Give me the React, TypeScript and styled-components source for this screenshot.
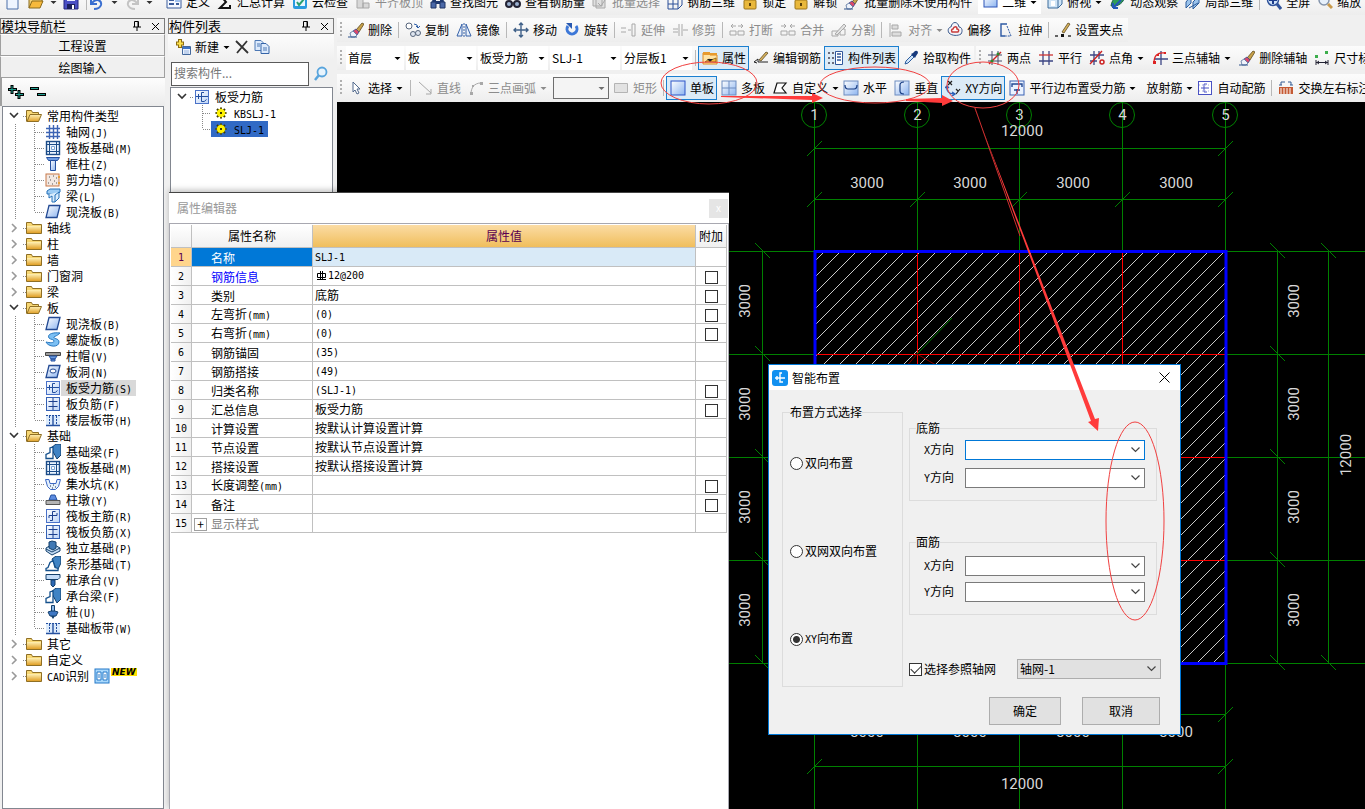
import React from "react";
import styled, { createGlobalStyle, css } from "styled-components";

const GlobalStyle = createGlobalStyle`
  * { box-sizing: border-box; }
  body {
    margin: 0;
    overflow: hidden;
    background: #f0f0f0;
    color: #000;
    font: 12px/16px "Noto Sans CJK SC", "Noto Sans", sans-serif;
  }
  button, select, input { font: inherit; color: inherit; margin: 0; }
`;

/* ---------- shared text ---------- */

const Latin = styled.span`
  font-family: "DejaVu Sans Mono", "Liberation Mono", monospace;
  font-size: 10px;
`;

function Mixed({ children }: { children: string }) {
  return (
    <>
      {children.split(/([\x20-\x7e]+)/).map((part, i) =>
        i % 2 ? <Latin key={i}>{part}</Latin> : part
      )}
    </>
  );
}

/* ---------- icons ---------- */

const B = "#2b5fb8";
const G = "#a8a8a8";

const icons: Record<string, React.ReactNode> = {
  doc: <path d="M3 0h8l3 3v12H3z" fill="#eef5ff" stroke="#4a6ea8" />,
  openDoc: (
    <>
      <path d="M1 14V3h5l1 2h7v3" fill="#f3d27a" stroke="#8a6a1c" />
      <path d="M1 14 4 7h11l-3 7z" fill="#f7b93c" stroke="#8a6a1c" />
    </>
  ),
  save: (
    <>
      <path d="M1 1h14v14H1z" fill="#4a4fc4" stroke="#22267c" />
      <path d="M4 1h8v6H4z" fill="#e8ecff" />
      <path d="M4 10h8v5H4z" fill="#1c205c" />
      <path d="M9 11h2v4H9z" fill="#fff" />
    </>
  ),
  undo: <path d="M3 9c4-5 10-3 9 2-1 3-4 4-7 4M2 4v6h6" fill="none" stroke="#3a6fd0" strokeWidth="2" />,
  redo: <path d="M13 9C9 4 3 6 4 11c1 3 4 4 7 4M14 4v6H8" fill="none" stroke="#c4c4c4" strokeWidth="2" />,
  define: (
    <>
      <path d="M1 1h14v13H1z" fill="#f4f8ff" stroke="#3a5c9c" />
      <path d="M3 6h5M3 10h5M10 10h3" stroke="#3a5c9c" strokeWidth="2" />
      <path d="M9 4h5v4H9z" fill="#9fc0ee" />
    </>
  ),
  sigma: <path d="M13 4V1H3l6 7-6 6h10v-3" fill="none" stroke="#111" strokeWidth="2" />,
  cloud: (
    <>
      <rect x="1" y="0" width="14" height="15" rx="2" fill="#2a9be0" />
      <path d="M3 4h10v8H3z" fill="#e8f6ff" />
      <path d="m5 8 2 3 5-6" fill="none" stroke="#2aa070" strokeWidth="2" />
    </>
  ),
  flush: (
    <>
      <path d="M2 5h6v9H2zM8 9h6v5H8z" fill="#d8d8d8" stroke={G} />
      <path d="M3 2h9" stroke={G} />
    </>
  ),
  find: (
    <>
      <path d="M1 8h5v6H1zM10 8h5v6h-5z" fill="#4a68a8" stroke="#1e3464" />
      <path d="M3 2h3v6H2zM10 2h3l1 6h-4zM6 7h4v3H6z" fill="#203a70" />
    </>
  ),
  viewRebar: (
    <>
      <circle cx="4" cy="10" r="3" fill="#9ab0d0" stroke="#223" strokeWidth="2" />
      <circle cx="12" cy="10" r="3" fill="#9ab0d0" stroke="#223" strokeWidth="2" />
      <path d="M6 9h4M3 6l3-3M12 6l-2-3" stroke="#223" />
    </>
  ),
  batch: (
    <>
      <path d="M1 2h9v10H1zM4 5h9v9H4z" fill="#e0e0e0" stroke={G} />
      <path d="m6 9 3 3 4-6" fill="none" stroke={G} />
    </>
  ),
  cube3d: (
    <path d="M1 5h10v10H1zM5 1h10v10M1 5l4-4M11 5l4-4M11 15l4-4M6 5v10M1 10h10M10 1 6 5" fill="none" stroke="#2b4f98" />
  ),
  lock: (
    <>
      <path d="M5 7V4q3-4 6 0v3" fill="none" stroke="#8a8a8a" strokeWidth="2" />
      <rect x="2" y="6" width="12" height="9" rx="1" fill="#e9b83c" stroke="#9c7418" />
      <path d="M7 9h2v3H7z" fill="#5c420a" />
    </>
  ),
  brush: (
    <>
      <path d="M8 8 14 1l2 1-5 8z" fill="#c8a24a" stroke="#5e4a1c" strokeWidth=".8" />
      <path d="M5 9 8 7l3 3-2 3z" fill="#d8486c" stroke="#3a4a8c" strokeWidth=".8" />
      <path d="M2 11l3-2 4 4-2 2H3z" fill="#eef2fa" stroke="#54719c" strokeWidth=".8" />
      <path d="M0 15h9" stroke="#30548c" />
    </>
  ),
  sq2d: <rect x="2" y="1" width="13" height="12" fill="url(#blueFade)" stroke="#2c55b8" />,
  topView: (
    <>
      <path d="M1 5 5 1h10v9l-4 4H1z" fill="#cfe4f6" stroke="#3c6c9c" />
      <path d="M1 5h10v9M11 5l4-4" fill="none" stroke="#3c6c9c" />
      <path d="M4 7h4v5H4z" fill="#fff" />
    </>
  ),
  orbit: (
    <>
      <path d="M1 12C2 4 8 0 15 2c-1 6-6 11-14 10z" fill="#2f9e58" stroke="#1a5c4c" />
      <path d="m3 14 8-8M3 14h5M3 14V9" stroke="#2458b8" strokeWidth="2" fill="none" />
    </>
  ),
  local3d: (
    <>
      <path d="m1 8 5-6v7l-5 5zM8 8l6-6v7l-6 6z" fill="#9cc4ec" stroke="#2c5c9c" />
      <path d="m4 14 9-5" stroke="#2c5c9c" />
    </>
  ),
  zoomAll: (
    <>
      <circle cx="7" cy="6" r="5.5" fill="#cfe2f8" stroke="#31549c" strokeWidth="1.5" />
      <path d="M7 2v8M3 6h8" stroke="#1c3c8c" strokeWidth="2" />
      <path d="m11 10 4 5" stroke="#31549c" strokeWidth="3" />
    </>
  ),
  zoom: (
    <>
      <circle cx="7" cy="6" r="5" fill="#e6f0fb" stroke="#8494ac" strokeWidth="1.5" />
      <path d="m11 10 4 4" stroke="#c89a4c" strokeWidth="3" />
    </>
  ),
  copy: (
    <>
      <circle cx="4" cy="4" r="3" fill="#fff" stroke="#56657c" />
      <circle cx="8" cy="12" r="2.5" fill="#dfe6f0" stroke="#56657c" />
      <circle cx="13" cy="11" r="2.5" fill="#dfe6f0" stroke="#56657c" />
      <path d="M9 2q4 0 4 4M11 4l2 2 2-2" fill="none" stroke="#2f5fa8" />
    </>
  ),
  mirror: (
    <>
      <path d="M6 2v12H1zM10 2v12h5z" fill="#e8f0fb" stroke="#3561a8" />
      <path d="M8 1v14" stroke="#3561a8" strokeDasharray="2 1" />
    </>
  ),
  move: <path d="M8 1v14M1 8h14M6 3l2-2 2 2M6 13l2 2 2-2M3 6 1 8l2 2M13 6l2 2-2 2" fill="none" stroke="#3f6088" strokeWidth="1.4" />,
  rotate: (
    <>
      <path d="M4 4a5 5 0 1 0 8 0" fill="none" stroke="#3d78d8" strokeWidth="3" />
      <path d="M2 1h6v6z" fill="#2858b0" />
    </>
  ),
  extend: <path d="M0 6h5M0 10h5M7 8h3M11 2h3v12h-3z" fill="none" stroke={G} />,
  trim: <path d="M1 7h5M1 10h5M7 2v12M10 2v12M11 8h5" fill="none" stroke={G} />,
  breakUp: <path d="M1 9h6v4H1zM9 9h6v4H9zM2 4h5M4 2 2 4l2 2M9 4h5M12 2l2 2-2 2" fill="none" stroke={G} />,
  merge: <path d="M1 9h6v4H1zM9 9h6v4H9zM1 4h5M4 2l2 2-2 2M10 4h5M12 2l-2 2 2 2" fill="none" stroke={G} />,
  split: (
    <>
      <path d="M1 9h6v5H1zM9 7h5v6H9z" fill="none" stroke={G} />
      <path d="m4 12 9-10 2 2-9 9z" fill="#e4e4e4" stroke={G} />
    </>
  ),
  align: <path d="M2 1v14M4 3h6v4H4zM4 10h9v4H4z" fill="#ddd" stroke={G} />,
  offset: (
    <>
      <path d="M2 11c-2-3 0-6 2-6 1-6 7-6 8 0 3 0 4 4 2 7-3 2-9 2-12-1z" fill="#f4f4fa" stroke="#39598c" />
      <path d="M5 10c-1-2 0-3 1-3 1-3 4-3 4 0 2 0 2 2 1 3z" fill="#fff" stroke="#c83c3c" strokeWidth="1.5" />
    </>
  ),
  stretch: (
    <>
      <path d="M9 2H3v12h4" fill="none" stroke="#2d59a4" strokeWidth="1.4" />
      <path d="m9 4 4 10H7" fill="none" stroke="#2d59a4" strokeDasharray="2 1" />
    </>
  ),
  grip: (
    <>
      <path d="M0 14h3M13 14h3" stroke="#333" strokeWidth="1.4" />
      <path d="M6 12h3v3H6z" fill="#111" />
      <path d="m7 10 6-9 2 1-6 9z" fill="#d8b25c" stroke="#5c4a22" strokeWidth=".8" />
    </>
  ),
  property: (
    <>
      <path d="M1 3h6l1 2h7v9H1z" fill="#ffe3a4" stroke="#e08a1c" />
      <path d="M1 2h7v1h7v2H1z" fill="#e89a2c" />
      <path d="m3 12 4-3 2 1 5-2v4z" fill="#f2b83c" stroke="#7c5410" strokeWidth=".7" />
      <path d="M5 9h6l-3 3z" fill="#222" />
    </>
  ),
  editRebar: (
    <>
      <path d="m1 12 4-3v3h10M1 12l3 1" fill="none" stroke="#222" />
      <path d="m6 10 7-8 2 1-7 8z" fill="#d8b25c" stroke="#5c4a22" strokeWidth=".8" />
    </>
  ),
  list: (
    <>
      <path d="M0 3h2M0 8h2M0 13h2M4 3h2M4 8h2M4 13h2" stroke="#445" strokeWidth="1.5" />
      <path d="M7.5 1.5h7v13h-7z" fill="#fff" stroke="#31589c" />
      <path d="M9 4h4M9 7h4M9 10h4" stroke="#31589c" strokeWidth="1.4" />
    </>
  ),
  picker: (
    <>
      <path d="m2 14 1-3 6-6 2 2-6 6z" fill="#cfe4fa" stroke="#2c5c9c" />
      <path d="m8 4 2-1 2-2q3-1 3 2l-2 3-1 2z" fill="#173a7c" />
    </>
  ),
  twoPoint: (
    <>
      <path d="M1 5h14M1 11h14M5 1v14M11 1v14" stroke="#444c6c" />
      <path d="M2 14 14 2" stroke="#c22" strokeWidth="1.4" />
      <circle cx="11" cy="4" r="1.5" fill="#2a8c2a" />
      <circle cx="5" cy="11" r="1.5" fill="#2a8c2a" />
    </>
  ),
  parallel: (
    <>
      <path d="M5 1v14M11 1v14M1 11h14" stroke="#3c4684" strokeWidth="1.3" />
      <path d="M1 5h14" stroke="#c33" strokeWidth="1.3" />
    </>
  ),
  pointAngle: (
    <>
      <path d="M1 5h14M5 1v14M10 1v8M1 11h7" stroke="#3c4684" strokeWidth="1.3" />
      <path d="M1 14 13 1" stroke="#c22" strokeWidth="1.4" />
      <circle cx="13" cy="12" r="2" fill="none" stroke="#c22" strokeWidth="1.5" />
    </>
  ),
  threePoint: (
    <>
      <path d="M9 1v14M3 9h13" stroke="#3c4684" strokeWidth="1.3" />
      <path d="M2 13C2 6 5 2 13 3" fill="none" stroke="#d22" strokeWidth="1.3" />
      <path d="M1 11h3v3H1zM5 4h2v2H5zM12 2h2v2h-2z" fill="#d22" />
    </>
  ),
  dimension: (
    <>
      <path d="M2 10v5M14 10v5M2 12.5h12M5 11l-2 1.5L5 14M11 11l2 1.5-2 1.5" fill="none" stroke="#223" />
      <path d="M1 5h3v3H1zM11 1h3v3h-3z" fill="#3cae4c" />
    </>
  ),
  cursor: <path d="M5 2v10l2-2 2 4 2-1-2-4h3z" fill="#fff" stroke="#51698c" />,
  line: <path d="M2 2 14 13M14 9v5H9" fill="none" stroke={G} />,
  arc: (
    <>
      <path d="M3 14C3 8 6 3 13 3" fill="none" stroke={G} />
      <path d="M2 12h3v3H2zM4 5h2v2H4zM12 2h3v3h-3z" fill={G} />
    </>
  ),
  rect: <path d="M1.5 3.5h13v9h-13z" fill="#e2e2e2" stroke="#b4b4b4" />,
  single: <rect x="1" y="1" width="14" height="14" fill="url(#blueFade)" stroke="#2c55c8" />,
  multi: (
    <>
      <rect x="1" y="1" width="14" height="14" fill="url(#blueFade)" stroke="#6c8cc0" />
      <path d="M8 1v14M1 8h14" stroke="#6c8cc0" />
    </>
  ),
  custom: <path d="M2 13 5 3h9l-4 5 4 5z" fill="#fff" stroke="#111" strokeWidth="1.2" />,
  horiz: (
    <>
      <rect x="1" y="1" width="14" height="14" fill="url(#blueFade)" stroke="#6c8cc0" />
      <path d="M2 5q0 4 3 4h6q3 0 3-4" fill="none" stroke="#173c84" strokeWidth="1.2" />
    </>
  ),
  vert: (
    <>
      <rect x="1" y="1" width="14" height="14" fill="url(#blueFade)" stroke="#6c8cc0" />
      <path d="M10 2Q6 2 6 5v6q0 3 4 3" fill="none" stroke="#173c84" strokeWidth="1.2" />
    </>
  ),
  xy: (
    <>
      <path d="m3 1 4 4M7 1 3 5M11 9l2 2M15 9l-4 5" stroke="#222" strokeWidth="1.2" />
      <path d="M2 6c-1 5 2 8 7 8M0 8l2-2 2 2M7 12l3 2-3 2" fill="none" stroke={B} strokeWidth="1.4" />
    </>
  ),
  edgeLayout: (
    <>
      <rect x="1" y="1" width="14" height="14" fill="#eaf2ff" stroke="#3a62b4" />
      <path d="M3 7V4h10v3M8 9v5M5 10h6" fill="none" stroke="#234a94" strokeWidth="1.4" />
    </>
  ),
  autoRebar: (
    <>
      <rect x="1.5" y="1.5" width="13" height="13" fill="#fff" stroke="#4a52c4" />
      <path d="M10 4H7v8h3M4 8h8" fill="none" stroke="#4a52c4" />
      <path d="M2 5h12M2 11h12" stroke="#a8ace0" strokeDasharray="1 2" />
    </>
  ),
  swap: (
    <>
      <path d="M1 7h14v7H1z" fill="#c45a34" />
      <path d="M3 8v6M6 8v6M9 8v6M12 8v6" stroke="#fff" />
      <path d="M3 5V2h4M13 5V2h-3M1 5h3M12 5h3" fill="none" stroke="#345c94" />
    </>
  ),
  newItem: (
    <>
      <path d="M5 0v9M1 4.5h8" stroke="#8c6c10" strokeWidth="4" />
      <path d="M5 1v7M2 4.5h6" stroke="#fbe04c" strokeWidth="2" />
      <path d="M7.5 7.5h8v8h-8z" fill="#eaf2ff" stroke="#44689c" />
      <path d="M8 9h7" stroke="#3c74c8" strokeWidth="2" />
      <path d="M9 12h5M9 14h5" stroke="#9ab4dc" />
    </>
  ),
  del: <path d="M2 2 14 14M13 2 3 14" stroke="#333" strokeWidth="1.8" />,
  duplicate: (
    <>
      <path d="M1 1.5h6l3 3v7H1z" fill="#dceafc" stroke="#4c78b4" />
      <path d="M7 4.5h5l3 3v7H7z" fill="#dceafc" stroke="#3564a8" />
      <path d="M3 5h3M3 7h3M9 9h4M9 11h4" stroke="#4c78b4" />
    </>
  ),
  search: (
    <>
      <circle cx="9" cy="6" r="4.5" fill="#e8f4fd" stroke="#58a4dc" strokeWidth="1.8" />
      <path d="m6 9-4 5" stroke="#58a4dc" strokeWidth="2.5" />
    </>
  ),
  folder: (
    <>
      <path d="M.5 13.5v-11h5l1 2h9v9z" fill="#f7d774" stroke="#8f6f24" />
      <path d="M1 6h14v7H1z" fill="url(#gold)" />
    </>
  ),
  folderOpen: (
    <>
      <path d="M.5 13.5v-11h5l1 2h6v3" fill="#f7d774" stroke="#8f6f24" />
      <path d="m1 13.5 3-7h11.5l-3 7z" fill="url(#gold)" stroke="#8f6f24" />
    </>
  ),
  axis: <path d="M1 4.5h14M1 8.5h14M1 12.5h14M4.5 1v14M8.5 1v14M12.5 1v14" stroke="#3c64b4" strokeWidth="1.4" />,
  raft: (
    <>
      <rect x="1.5" y="1.5" width="13" height="13" fill="#eaf4ff" stroke="#1c4c88" strokeWidth="1.4" />
      <path d="M4.5 1v14M11.5 1v14M1 4.5h14M1 11.5h14" stroke="#1c4c88" />
      <path d="M6.500 6.500h3v3h-3z" fill="#fff" stroke="#7ca4d4" />
    </>
  ),
  column: (
    <>
      <path d="M1.500 1.500h13l-2 3h-9z" fill="#6c9ce4" stroke="#2450a0" />
      <path d="M5.500 4.500h5v10h-5z" fill="url(#blueFade)" stroke="#2450a0" />
    </>
  ),
  wall: (
    <>
      <rect x="1" y="2" width="13" height="12" fill="#f2e8e2" stroke="#c87848" />
      <path d="M4 5h1M8 4h1M11 6h1M5 8h1M9 9h1M3 11h1M7 12h1M11 11h1" stroke="#555" />
      <path d="M14 4v2M14 10v2" stroke="#e8a03c" strokeWidth="2" />
    </>
  ),
  beam: (
    <>
      <path d="M2 3 5 1h10v3l-3 2H2z" fill="#9cccf4" stroke="#2470b8" />
      <path d="M4 6v4l3-2v6h3l4-4V4" fill="#d8ecfc" stroke="#2470b8" />
      <path d="M10 14V7l4-3" fill="none" stroke="#2470b8" />
    </>
  ),
  slab: <path d="M4 1.500h11l-3 12H1z" fill="url(#blueFade)" stroke="#234a94" strokeWidth="1.3" />,
  spiral: <path d="M15 1C6 0 2 3 4 6c2 2 5 1 5 3s-4 2-8 1c2 5 13 6 13 0 0-4-6-3-5-5 1-1 3-1 6-4z" fill="#7cc0f4" stroke="#2878c0" />,
  cap: (
    <>
      <path d="M.5 4.500h15v3H.5z" fill="#9c9c9c" stroke="#444" />
      <path d="M4 8h8l-2 3H6zM6 11h4v2H6z" fill="#6c9ce0" stroke="#2450a0" />
    </>
  ),
  hole: (
    <>
      <path d="M4 1.500h11l-3 12H1z" fill="url(#blueFade)" stroke="#234a94" strokeWidth="1.3" />
      <ellipse cx="8" cy="7" rx="3" ry="2" fill="#fff" stroke="#234a94" />
    </>
  ),
  force: (
    <>
      <rect x="1.500" y="1.500" width="13" height="13" fill="url(#paleFade)" stroke="#4a72c8" />
      <path d="M2 7.500h12M10 3.500H7.500v9q3 1 5-2M4.500 5v5" fill="none" stroke="#2450a0" />
    </>
  ),
  negative: (
    <>
      <rect x="1.500" y="1.500" width="13" height="13" fill="url(#paleFade)" stroke="#3460b4" />
      <path d="M3.500 5.500h9M3.500 10.500h9M8 2v12" fill="none" stroke="#1c4090" />
    </>
  ),
  strip: (
    <>
      <path d="M1 3h14v10H1z" fill="#dcebfc" />
      <path d="M1 13.5h14M8 4v9" stroke="#2450a0" strokeWidth="1.4" />
      <path d="M1 3.500h14M4.500 4v9M11.500 4v9" stroke="#2450a0" strokeDasharray="2 1" />
    </>
  ),
  footBeam: (
    <>
      <path d="m6 4 5-4h5v11l-4 4z" fill="#3f83c4" stroke="#14406c" />
      <path d="M1 14.500v-4l4-2V4l3-1v11.500z" fill="#fff" stroke="#14508c" strokeWidth="1.3" />
    </>
  ),
  pit: (
    <>
      <path d="M.5 3.500H4l1 4h6l1-4h3.500l-2 7-3 3h-5l-3-3z" fill="#e4f0fc" stroke="#3c68c4" />
      <path d="M5 10h1M8 9h1M10 11h1M7 12h1" stroke="#234" />
    </>
  ),
  pier: (
    <>
      <path d="M6 3h4l2 5H4z" fill="#5c8ce0" stroke="#2450a0" />
      <path d="M1 8.5h14v4H1z" fill="#b4b4b4" stroke="#555" />
    </>
  ),
  mainBar: (
    <>
      <rect x="1.500" y="1.500" width="13" height="13" fill="url(#paleFade)" stroke="#4a72c8" />
      <path d="M4 10V7.500h8V5M10.500 3.500h-3v9H5" fill="none" stroke="#1c4090" />
    </>
  ),
  isolated: (
    <>
      <path d="m1 8 7-4 7 4v3l-8 4-6-4z" fill="#c4dcf4" stroke="#14406c" />
      <path d="M4 2l3-1 4 1v6l-3 2-4-2z" fill="#3f78b4" stroke="#14406c" />
      <path d="m1 9 6 3 8-4" fill="none" stroke="#14406c" />
    </>
  ),
  stripFoot: (
    <>
      <path d="m7 3 4-3h5v7l-4 8z" fill="#3f83c4" stroke="#14406c" />
      <path d="M1 14.500v-2l2-1 2-5 3-2 2 7 3 1v2z" fill="#fff" stroke="#14508c" strokeWidth="1.3" />
    </>
  ),
  pileCap: (
    <>
      <path d="M1 2.500h14v3l-2 2H1z" fill="#c4dcf8" stroke="#14406c" />
      <path d="M6 8h4v5l-2 2-2-2z" fill="#2c68b4" stroke="#14406c" />
    </>
  ),
  pile: (
    <>
      <path d="M6.500 1.500h3v6h-3z" fill="#8cb8e8" stroke="#14406c" />
      <path d="m3 8 3-1h4l3 1-2 4H5z" fill="#3f78c4" stroke="#14406c" />
      <path d="m6 12 2 3 2-3z" fill="#14406c" />
    </>
  ),
  cad: (
    <>
      <rect x="1" y="1" width="14" height="14" fill="#a8d8fc" stroke="#2478c8" />
      <path d="M3 4h4v8H3zM9 4h4v8H9z" fill="#fff" stroke="#2478c8" />
      <path d="M4 7h2M4 9h2M10 7h2M10 9h2" stroke="#2478c8" />
    </>
  ),
  gear: (
    <>
      <path d="M8 2.500v11M2.500 8h11M4 4l8 8M12 4l-8 8" stroke="#3c3800" strokeWidth="2" />
      <circle cx="8" cy="8" r="4" fill="#fff200" />
      <path d="M8 3.500v9M3.500 8h9" stroke="#fff200" />
      <path d="M7 7h2v2H7z" fill="#3c3800" />
    </>
  ),
  app: (
    <>
      <rect x="0" y="0" width="16" height="16" rx="3" fill="#1190f0" />
      <path d="M3 8h10M10 3H8v9h3M5 6v4" fill="none" stroke="#fff" strokeWidth="1.4" />
    </>
  ),
};

const IconSvg = styled.svg`
  flex: none;
  display: block;
`;

function Icon({ name }: { name: string }) {
  return (
    <IconSvg width="16" height="16" viewBox="0 0 16 16" aria-hidden="true">
      {icons[name]}
    </IconSvg>
  );
}

const Defs = () => (
  <svg width="0" height="0" display="block" aria-hidden="true">
    <defs>
      <linearGradient id="blueFade" x1="0" y1="0" x2="1" y2="1">
        <stop offset="0" stopColor="#ffffff" />
        <stop offset="1" stopColor="#8cb4f0" />
      </linearGradient>
      <linearGradient id="paleFade" x1="0" y1="0" x2="1" y2="1">
        <stop offset="0" stopColor="#ffffff" />
        <stop offset="1" stopColor="#bcd4f8" />
      </linearGradient>
      <linearGradient id="gold" x1="0" y1="0" x2="0" y2="1">
        <stop offset="0" stopColor="#fff0b4" />
        <stop offset="1" stopColor="#e0a028" />
      </linearGradient>
    </defs>
  </svg>
);

const Caret = () => (
  <IconSvg width="7" height="3" viewBox="0 0 7 3" aria-hidden="true">
    <path d="M.5 0h6l-3 3z" fill="currentColor" />
  </IconSvg>
);

/* ---------- toolbars ---------- */

const Shell = styled.div`
  position: relative;
  display: flex;
  flex-direction: column;
  min-height: 100vh;
  overflow: hidden;
`;

const TopStrip = styled.header`
  height: 18px;
  overflow: hidden;
  display: flex;
  flex-direction: column;
  justify-content: flex-end;
  padding-bottom: 3px;
`;

const Bar = styled.div<{ $h: number; $fit?: boolean }>`
  display: flex;
  align-items: center;
  flex: none;
  height: ${(p) => p.$h}px;
  align-self: ${(p) => (p.$fit ? "flex-start" : "stretch")};
  padding-right: ${(p) => (p.$fit ? 2 : 0)}px;
  background: linear-gradient(#fcfcfc, #f4f4f4 60%, #ededed);
  white-space: nowrap;
`;

const Tool = styled.button<{ $on?: boolean; $off?: boolean; $tail: number; $bare?: boolean }>`
  display: flex;
  align-items: center;
  gap: 4px;
  flex: none;
  height: 24px;
  padding: 0 ${(p) => p.$tail}px 0 ${(p) => (p.$bare ? 6 : 4)}px;
  border: 0;
  background: none;
  color: ${(p) => (p.$off ? "#8c8c8c" : "#000")};
  white-space: nowrap;
  ${(p) =>
    p.$on &&
    css`
      background: #dcebf7;
      box-shadow: inset 0 0 0 1px #1a7fd0;
    `}
`;

const Sep = styled.span`
  flex: none;
  width: 1px;
  height: 16px;
  margin: 0 2px 0 3px;
  background: #b8b8b8;
`;

const Grip = styled.span`
  flex: none;
  width: 2px;
  height: 16px;
  margin: 0 2px 0 3px;
  background: repeating-linear-gradient(#b0b0b0 0 2px, transparent 2px 4px);
`;

type Drop = "menu" | "split";
interface ToolProps {
  icon?: string;
  label: string;
  on?: boolean;
  off?: boolean;
  drop?: Drop;
}

function T({ icon, label, on, off, drop }: ToolProps) {
  const tail = drop === "menu" ? 0 : drop === "split" ? 4 : 3;
  return (
    <Tool type="button" disabled={off} $on={on} $off={off} $tail={tail} $bare={!icon}>
      {icon && <Icon name={icon} />}
      {label}
      {drop && <Caret />}
    </Tool>
  );
}

const Combo = styled.span<{ $w: number; $framed?: boolean }>`
  display: grid;
  align-items: center;
  flex: none;
  width: ${(p) => p.$w}px;
  height: ${(p) => (p.$framed ? 22 : 24)}px;
  margin-left: 2px;
  background: ${(p) => (p.$framed ? "#f4f4f4" : "#fff")};
  border: ${(p) => (p.$framed ? "1px solid #6e6e6e" : "0")};
  color: ${(p) => (p.$framed ? "#6e6e6e" : "#000")};
  & > * { grid-area: 1 / 1; }
  & > svg { justify-self: end; margin-right: 3px; pointer-events: none; }
`;

const BareSelect = styled.select`
  appearance: none;
  width: 100%;
  height: 100%;
  padding: 0 2px;
  border: 0;
  border-radius: 0;
  background: none;
`;

function Pick({ value, label, w, framed }: { value: string; label: string; w: number; framed?: boolean }) {
  return (
    <Combo $w={w} $framed={framed}>
      <BareSelect aria-label={label} disabled={framed}>
        <option>{value}</option>
      </BareSelect>
      <Caret />
    </Combo>
  );
}

const ViewPick = styled.span`
  display: flex;
  flex: none;
  margin: 0 2px 0 3px;
  background: #fff;
`;

const FileTools = styled.span`
  display: flex;
  align-items: center;
  flex: none;
  width: 162px;
  padding-left: 4px;
`;

const FileTool = styled.button<{ $w: number }>`
  display: flex;
  align-items: center;
  gap: 6px;
  width: ${(p) => p.$w}px;
  padding: 0;
  border: 0;
  background: none;
  color: #333;
`;

function FileBar() {
  return (
    <TopStrip>
      <Bar $h={26}>
        <FileTools>
          <FileTool type="button" $w={24} aria-label="新建"><Icon name="doc" /></FileTool>
          <FileTool type="button" $w={35} aria-label="打开"><Icon name="openDoc" /><Caret /></FileTool>
          <FileTool type="button" $w={20} aria-label="保存"><Icon name="save" /></FileTool>
          <Sep />
          <FileTool type="button" $w={35} aria-label="撤销"><Icon name="undo" /><Caret /></FileTool>
          <FileTool type="button" $w={35} aria-label="恢复"><Icon name="redo" /><Caret /></FileTool>
        </FileTools>
        <T icon="define" label="定义" />
        <T icon="sigma" label="汇总计算" />
        <T icon="cloud" label="云检查" />
        <T icon="flush" label="平齐板顶" off />
        <T icon="find" label="查找图元" />
        <T icon="viewRebar" label="查看钢筋量" />
        <T icon="batch" label="批量选择" off />
        <T icon="cube3d" label="钢筋三维" />
        <T icon="lock" label="锁定" />
        <T icon="lock" label="解锁" />
        <T icon="brush" label="批量删除未使用构件" />
        <ViewPick><T icon="sq2d" label="二维" drop="split" /></ViewPick>
        <T icon="topView" label="俯视" drop="split" />
        <T icon="orbit" label="动态观察" />
        <T icon="local3d" label="局部三维" />
        <Sep />
        <T icon="zoomAll" label="全屏" />
        <T icon="zoom" label="缩放" />
      </Bar>
    </TopStrip>
  );
}

const ToolRows = styled.div`
  display: flex;
  flex-direction: column;
  gap: 4px;
  flex: none;
`;

const ToolLine = styled.div`
  display: flex;
  gap: 2px;
`;

function DrawingTools() {
  return (
    <ToolRows>
      <Bar $h={24} $fit>
        <Grip />
        <T icon="brush" label="删除" />
        <Sep />
        <T icon="copy" label="复制" />
        <T icon="mirror" label="镜像" />
        <Sep />
        <T icon="move" label="移动" />
        <T icon="rotate" label="旋转" />
        <Sep />
        <T icon="extend" label="延伸" off />
        <T icon="trim" label="修剪" off />
        <Sep />
        <T icon="breakUp" label="打断" off />
        <T icon="merge" label="合并" off />
        <T icon="split" label="分割" off />
        <Sep />
        <T icon="align" label="对齐" off drop="menu" />
        <T icon="offset" label="偏移" />
        <T icon="stretch" label="拉伸" />
        <Sep />
        <T icon="grip" label="设置夹点" />
      </Bar>
      <ToolLine>
        <Bar $h={24}>
          <Grip />
          <Pick label="楼层" value="首层" w={58} />
          <Pick label="构件大类" value="板" w={70} />
          <Pick label="构件类型" value="板受力筋" w={70} />
          <Pick label="构件名称" value="SLJ-1" w={70} />
          <Pick label="分层" value="分层板1" w={70} />
          <Sep />
          <T icon="property" label="属性" on />
          <T icon="editRebar" label="编辑钢筋" />
          <T icon="list" label="构件列表" on />
          <T icon="picker" label="拾取构件" />
        </Bar>
        <Bar $h={24}>
          <Grip />
          <T icon="twoPoint" label="两点" />
          <T icon="parallel" label="平行" />
          <T icon="pointAngle" label="点角" drop="split" />
          <T icon="threePoint" label="三点辅轴" drop="split" />
          <T icon="brush" label="删除辅轴" />
          <T icon="dimension" label="尺寸标注" />
        </Bar>
      </ToolLine>
      <Bar $h={28}>
        <Grip />
        <T icon="cursor" label="选择" drop="split" />
        <Sep />
        <T icon="line" label="直线" off />
        <T icon="arc" label="三点画弧" off drop="split" />
        <Pick label="画法参数" value="" w={56} framed />
        <T icon="rect" label="矩形" off />
        <Sep />
        <T icon="single" label="单板" on />
        <T icon="multi" label="多板" />
        <T icon="custom" label="自定义" drop="menu" />
        <T icon="horiz" label="水平" />
        <T icon="vert" label="垂直" />
        <T icon="xy" label="XY方向" on />
        <T icon="edgeLayout" label="平行边布置受力筋" drop="split" />
        <T label="放射筋" drop="menu" />
        <T icon="autoRebar" label="自动配筋" />
        <Sep />
        <T icon="swap" label="交换左右标注" />
      </Bar>
    </ToolRows>
  );
}

/* ---------- docked panels ---------- */

const Body = styled.div`
  display: flex;
  flex: 1;
`;

const Panel = styled.section<{ $w: number }>`
  display: flex;
  flex-direction: column;
  flex: none;
  width: ${(p) => p.$w}px;
  margin-right: 3px;
`;

const PanelHead = styled.div`
  display: flex;
  align-items: center;
  flex: none;
  height: 16px;
  border: 1px solid #7a7a7a;
  background: #f0f0f0;
  font-size: 13px;
  line-height: 14px;
`;

const PanelTitle = styled.h2`
  flex: 1;
  margin: 0;
  font: inherit;
  white-space: nowrap;
`;

const TinyButton = styled.button`
  display: flex;
  align-items: center;
  justify-content: center;
  width: 18px;
  height: 13px;
  padding: 0;
  border: 0;
  background: none;
`;

function PanelTop({ title }: { title: string }) {
  return (
    <PanelHead>
      <PanelTitle>{title}</PanelTitle>
      <TinyButton type="button" aria-label="固定">
        <svg width="8" height="10" viewBox="0 0 8 10"><path d="M1.5 6V.5h4V6M5 1v5M0 6h8M4 6v4" fill="none" stroke="#000" /></svg>
      </TinyButton>
      <TinyButton type="button" aria-label="关闭">
        <svg width="9" height="9" viewBox="0 0 9 9"><path d="m1 1 7 7M8 1 1 8" stroke="#000" /></svg>
      </TinyButton>
    </PanelHead>
  );
}

const NavButton = styled.button`
  height: 22px;
  padding: 2px 0 0;
  border: 1px solid #a0a0a0;
  border-top-color: #fff;
  background: #f0f0f0;
`;

const NavTools = styled.div`
  display: flex;
  align-items: center;
  gap: 4px;
  height: 28px;
  padding-left: 6px;
  border-left: 2px solid #a0a0a0;
  background: linear-gradient(#fdfdfd, #ececec);
`;

const TreeBox = styled.ul<{ $left: number }>`
  flex: 1;
  margin: 0 1px 0 ${(p) => p.$left}px;
  padding: 1px 0 0;
  border: 1px solid #828790;
  background: #fff;
  list-style: none;
`;

const TreeRow = styled.li`
  display: flex;
  align-items: center;
  height: 16px;
  white-space: nowrap;
`;

const TreeLabel = styled.span<{ $state?: "hot" }>`
  height: 16px;
  padding: 0 ${(p) => (p.$state ? 4 : 0)}px 0 5px;
  background: ${(p) => (p.$state === "hot" ? "#d9d9d9" : "none")};
`;

const NewBadge = styled.sup`
  padding: 0 1px;
  background: #ffe000;
  font: italic bold 9px/8px "DejaVu Sans", sans-serif;
  align-self: flex-start;
`;

const CadMark = styled.span`
  display: flex;
  align-items: center;
  gap: 1px;
  margin-left: 5px;
`;

const Chevron = ({ open }: { open?: boolean }) => (
  <path
    d={open ? "m8 5 4 4 4-4" : "m10 4 4 4-4 4"}
    fill="none"
    stroke={open ? "#333" : "#999"}
    strokeWidth="1.6"
  />
);

const dotted = { stroke: "#888", strokeDasharray: "1 1", shapeRendering: "crispEdges" as const };

interface Branch {
  label: string;
  items?: [string, string][];
}

const tree: Branch[] = [
  {
    label: "常用构件类型",
    items: [
      ["axis", "轴网(J)"],
      ["raft", "筏板基础(M)"],
      ["column", "框柱(Z)"],
      ["wall", "剪力墙(Q)"],
      ["beam", "梁(L)"],
      ["slab", "现浇板(B)"],
    ],
  },
  { label: "轴线" },
  { label: "柱" },
  { label: "墙" },
  { label: "门窗洞" },
  { label: "梁" },
  {
    label: "板",
    items: [
      ["slab", "现浇板(B)"],
      ["spiral", "螺旋板(B)"],
      ["cap", "柱帽(V)"],
      ["hole", "板洞(N)"],
      ["force", "板受力筋(S)"],
      ["negative", "板负筋(F)"],
      ["strip", "楼层板带(H)"],
    ],
  },
  {
    label: "基础",
    items: [
      ["footBeam", "基础梁(F)"],
      ["raft", "筏板基础(M)"],
      ["pit", "集水坑(K)"],
      ["pier", "柱墩(Y)"],
      ["mainBar", "筏板主筋(R)"],
      ["negative", "筏板负筋(X)"],
      ["isolated", "独立基础(P)"],
      ["stripFoot", "条形基础(T)"],
      ["pileCap", "桩承台(V)"],
      ["footBeam", "承台梁(F)"],
      ["pile", "桩(U)"],
      ["strip", "基础板带(W)"],
    ],
  },
  { label: "其它" },
  { label: "自定义" },
  { label: "CAD识别" },
];

function NavTree() {
  return (
    <TreeBox $left={2}>
      {tree.map((b) => (
        <React.Fragment key={b.label}>
          <TreeRow>
            <IconSvg width="23" height="16" viewBox="0 0 23 16" aria-hidden="true">
              <g transform="translate(-1 0)"><Chevron open={!!b.items} /></g>
              <path d="M20 8.5h3" {...dotted} />
            </IconSvg>
            <Icon name={b.items ? "folderOpen" : "folder"} />
            <TreeLabel><Mixed>{b.label}</Mixed></TreeLabel>
            {b.label === "CAD识别" && (
              <CadMark><Icon name="cad" /><NewBadge>NEW</NewBadge></CadMark>
            )}
          </TreeRow>
          {b.items?.map(([icon, label], i) => (
            <TreeRow key={label}>
              <IconSvg width="42" height="16" viewBox="0 0 42 16" aria-hidden="true">
                <path d="M12.5 0v16" {...dotted} />
                <path d={i === b.items!.length - 1 ? "M31.5 0v8" : "M31.5 0v16"} {...dotted} />
                <path d="M32 8.5h10" {...dotted} />
              </IconSvg>
              <Icon name={icon} />
              <TreeLabel $state={icon === "force" ? "hot" : undefined}><Mixed>{label}</Mixed></TreeLabel>
            </TreeRow>
          ))}
        </React.Fragment>
      ))}
    </TreeBox>
  );
}

const ListTools = styled.div`
  display: flex;
  align-items: center;
  height: 26px;
  padding-left: 7px;
  gap: 4px;
  background: linear-gradient(#fcfcfc, #f0f0f0);
`;

const ListButton = styled.button`
  display: flex;
  align-items: center;
  gap: 4px;
  padding: 0;
  border: 0;
  background: none;
`;

const SearchRow = styled.div`
  display: flex;
  height: 27px;
  padding: 2px 1px 1px 3px;
`;

const SearchInput = styled.input`
  flex: 1;
  min-width: 0;
  height: 24px;
  padding: 0 2px 4px;
  border: 1px solid #5a5a5a;
  background: #fff;
  &::placeholder { color: #767676; opacity: 1; }
`;

const SearchButton = styled.button`
  display: flex;
  align-items: center;
  justify-content: center;
  width: 24px;
  padding: 0;
  border: 0;
  background: none;
`;

const PickedRow = styled.span<{ $on?: boolean }>`
  display: flex;
  height: 16px;
  padding: 0 4px 0 2px;
  background: ${(p) => (p.$on ? "#316ac5" : "none")};
`;

function ComponentList() {
  return (
    <Panel $w={166}>
      <PanelTop title="构件列表" />
      <ListTools>
        <ListButton type="button"><Icon name="newItem" />新建<Caret /></ListButton>
        <ListButton type="button" aria-label="删除"><Icon name="del" /></ListButton>
        <ListButton type="button" aria-label="复制"><Icon name="duplicate" /></ListButton>
      </ListTools>
      <SearchRow>
        <SearchInput placeholder="搜索构件..." aria-label="搜索构件" />
        <SearchButton type="button" aria-label="搜索"><Icon name="search" /></SearchButton>
      </SearchRow>
      <TreeBox $left={2}>
        <TreeRow>
          <IconSvg width="23" height="16" viewBox="0 0 23 16" aria-hidden="true">
            <g transform="translate(-1 0)"><Chevron open /></g>
            <path d="M19 8.5h4" {...dotted} />
          </IconSvg>
          <Icon name="force" />
          <TreeLabel>板受力筋</TreeLabel>
        </TreeRow>
        {["KBSLJ-1", "SLJ-1"].map((name, i) => (
          <TreeRow key={name}>
            <IconSvg width="40" height="16" viewBox="0 0 40 16" aria-hidden="true">
              <path d={i ? "M31.5 0v8" : "M31.5 0v16"} {...dotted} />
              <path d="M32 8.5h8" {...dotted} />
            </IconSvg>
            <PickedRow $on={i === 1}>
              <Icon name="gear" />
              <TreeLabel><Mixed>{name}</Mixed></TreeLabel>
            </PickedRow>
          </TreeRow>
        ))}
      </TreeBox>
    </Panel>
  );
}

/* ---------- drawing canvas ---------- */

const Main = styled.main`
  display: flex;
  flex-direction: column;
  flex: 1;
  min-width: 0;
`;

const Canvas = styled.div`
  display: flex;
  flex: 1;
  background: #000;
  svg { flex: 1; min-width: 0; }
  text {
    font: 15px Roboto, "Liberation Sans", sans-serif;
    fill: #d8d8d8;
    text-anchor: middle;
    dominant-baseline: central;
  }
`;

const XS = [814.5, 917.5, 1019.5, 1122.5, 1225.5];
const YS = [251.5, 354.5, 457.5, 560.5, 663.5];
const MIDS_X = [867, 970, 1073, 1176];
const MIDS_Y = [301, 404, 507, 610];

function Plan() {
  const hatch = Array.from({ length: 52 }, (_, i) => 1076 + i * 16);
  const rise = (x: number, y: number) => `M${x - 8} ${y + 8}l15-15`;
  const fall = (x: number, y: number) => `M${x - 7} ${y - 8}l15 15`;
  const ticks = [
    ...[148.5, 766.5].flatMap((y) => [rise(XS[0], y), rise(XS[4], y)]),
    ...[199.5, 714.5].flatMap((y) => XS.map((x) => rise(x, y))),
    ...[762.5, 1277.5].flatMap((x) => YS.map((y) => fall(x, y))),
    fall(1328.5, YS[0]),
    fall(1328.5, YS[4]),
  ].join("");
  return (
    <Canvas>
      <svg role="img" aria-label="板平面图">
        <clipPath id="slabClip"><path d="M815 252h410v411H815z" /></clipPath>
        <g transform="translate(-337 -102)">
          <g stroke="#008000" fill="none" shapeRendering="crispEdges">
            {XS.map((x) => <path key={x} d={`M${x} 102V809`} />)}
            {YS.map((y) => <path key={y} d={`M728 ${y}H1800`} />)}
            <path d="M814 148.5h412M814 199.5h412M814 714.5h412M814 766.5h412M762.5 251v412M1277.5 251v412M1328.5 251v412" />
            <path d={ticks} />
          </g>
          <path d="M815 252h410v411H815z" fill="#000" />
          <g clipPath="url(#slabClip)" stroke="#c8c8c8" shapeRendering="crispEdges">
            {hatch.map((s) => <path key={s} d={`M${s - 251} 251 ${s - 664} 664`} />)}
          </g>
          <g stroke="#f00" shapeRendering="crispEdges">
            {XS.slice(1, 4).map((x) => <path key={x} d={`M${x} 252V663`} />)}
            {YS.slice(1, 4).map((y) => <path key={y} d={`M815 ${y}H1225`} />)}
          </g>
          <path d="m917 354 35-36" stroke="#008000" />
          <path d="m917 354-12 14M917 354l24 14" stroke="#800000" />
          <path d="M815 251.5h411v412H815z" fill="none" stroke="#00f" strokeWidth="3" />
          {XS.map((x, i) => (
            <g key={x}>
              <circle cx={x - 0.5} cy="115" r="12.5" fill="none" stroke="#008000" />
              <text x={x} y="115">{i + 1}</text>
            </g>
          ))}
          <text x="1022" y="131">12000</text>
          <text x="1022" y="784">12000</text>
          {MIDS_X.map((x) => (
            <React.Fragment key={x}>
              <text x={x} y="183">3000</text>
              <text x={x} y="732">3000</text>
            </React.Fragment>
          ))}
          {MIDS_Y.map((y) => (
            <React.Fragment key={y}>
              <text transform={`translate(745 ${y}) rotate(-90)`}>3000</text>
              <text transform={`translate(1294 ${y}) rotate(-90)`}>3000</text>
            </React.Fragment>
          ))}
          <text transform="translate(1346 455) rotate(-90)">12000</text>
        </g>
      </svg>
    </Canvas>
  );
}

/* ---------- property editor window ---------- */

const PropWindow = styled.section`
  position: absolute;
  left: 169px;
  top: 192px;
  bottom: 0;
  width: 560px;
  border-top: 1px solid #444;
  background: #fff;
  box-shadow: 0 -2px 6px rgba(0, 0, 0, 0.25);
`;

const PropTitle = styled.div`
  display: flex;
  align-items: center;
  justify-content: space-between;
  height: 31px;
  padding: 0 1px 0 8px;
  border-bottom: 1px solid #a8a8b0;
  color: #999;
`;

const PropClose = styled.button`
  width: 19px;
  height: 19px;
  padding: 0;
  border: 0;
  background: #e5e5e5;
  color: #fff;
  font-size: 10px;
  line-height: 10px;
`;

const PropBody = styled.div`
  height: calc(100% - 31px);
  padding: 1px 1px 0;
  border: solid #a8a8b0;
  border-width: 0 1px;
`;

const Table = styled.table`
  width: 556px;
  table-layout: fixed;
  border-collapse: separate;
  border-spacing: 0;
  th, td {
    height: 19px;
    padding: 0;
    border: solid #c0c0c0;
    border-width: 0 1px 1px 0;
    font-weight: normal;
    line-height: 16px;
    text-align: left;
    white-space: nowrap;
  }
  thead th {
    height: 23px;
    text-align: center;
    background: linear-gradient(#fff, #f0f0f0);
  }
`;

const ValueHead = styled.th`
  && {
    background: linear-gradient(#fbdca4, #f0be5c);
    color: #5a0050;
  }
`;

const NumCell = styled.th<{ $on: boolean }>`
  && { text-align: center; }
  background: ${(p) => (p.$on ? "#ffd58c" : "linear-gradient(90deg, #fff, #f0f0f0)")};
  color: ${(p) => (p.$on ? "#5a0050" : "#000")};
`;

const NameCell = styled.td<{ $on: boolean; $tone?: string }>`
  background: ${(p) => (p.$on ? "#0078d7" : "#fff")};
  color: ${(p) => (p.$on ? "#fff" : p.$tone || "#000")};
`;

const NameBox = styled.span`
  display: flex;
  align-items: center;
  height: 18px;
  padding: 2px 0 0 2px;
`;

const Expander = styled.button`
  width: 13px;
  height: 13px;
  margin-right: 4px;
  padding: 0;
  border: 1px solid #a0a0a0;
  background: #fff;
  color: #000;
  font-size: 12px;
  line-height: 10px;
`;

const ExpanderGap = styled.span`
  width: 17px;
`;

const ValueCell = styled.td<{ $on: boolean }>`
  && { padding-left: 2px; }
  background: ${(p) => (p.$on ? "#d9eaf7" : "#fff")};
`;

const RebarValue = styled.span`
  display: flex;
  align-items: center;
`;

const CheckCell = styled.td`
  && { text-align: center; line-height: 14px; }
`;

const Tick = styled.input`
  appearance: none;
  display: inline-grid;
  width: 13px;
  height: 13px;
  border: 1px solid #333;
  background: #fff;
  vertical-align: middle;
  &:checked::after {
    content: "";
    width: 9px;
    height: 5px;
    margin: 1px;
    border: solid #333;
    border-width: 0 0 1px 1px;
    transform: rotate(-45deg);
  }
`;

interface Prop {
  name: string;
  value: string;
  check?: boolean;
  tone?: string;
  rebar?: boolean;
  expand?: boolean;
}

const props: Prop[] = [
  { name: "名称", value: "SLJ-1" },
  { name: "钢筋信息", value: "12@200", check: true, tone: "#00f", rebar: true },
  { name: "类别", value: "底筋", check: true },
  { name: "左弯折(mm)", value: "(0)", check: true },
  { name: "右弯折(mm)", value: "(0)", check: true },
  { name: "钢筋锚固", value: "(35)" },
  { name: "钢筋搭接", value: "(49)" },
  { name: "归类名称", value: "(SLJ-1)", check: true },
  { name: "汇总信息", value: "板受力筋", check: true },
  { name: "计算设置", value: "按默认计算设置计算" },
  { name: "节点设置", value: "按默认节点设置计算" },
  { name: "搭接设置", value: "按默认搭接设置计算" },
  { name: "长度调整(mm)", value: "", check: true },
  { name: "备注", value: "", check: true },
  { name: "显示样式", value: "", tone: "#808080", expand: true },
];

function PropertyEditor() {
  return (
    <PropWindow>
      <PropTitle>
        属性编辑器
        <PropClose type="button" aria-label="关闭">x</PropClose>
      </PropTitle>
      <PropBody>
        <Table>
          <colgroup>
            <col width="21" />
            <col width="121" />
            <col width="383" />
            <col width="31" />
          </colgroup>
          <thead>
            <tr>
              <th />
              <th>属性名称</th>
              <ValueHead>属性值</ValueHead>
              <th>附加</th>
            </tr>
          </thead>
          <tbody>
            {props.map((p, i) => (
              <tr key={p.name}>
                <NumCell $on={i === 0}><Mixed>{String(i + 1)}</Mixed></NumCell>
                <NameCell $on={i === 0} $tone={p.tone}>
                  <NameBox>
                    {p.expand ? <Expander type="button" aria-label="展开">+</Expander> : <ExpanderGap />}
                    <span><Mixed>{p.name}</Mixed></span>
                  </NameBox>
                </NameCell>
                <ValueCell $on={i === 0}>
                  {p.rebar ? (
                    <RebarValue>
                      <IconSvg width="13" height="12" viewBox="0 0 13 12" aria-label="三级钢">
                        <path d="M2.5 3.5h8v4h-8zM5.5 1v9M7.5 1v9M2 9.5h9" fill="none" stroke="#000" />
                      </IconSvg>
                      <Mixed>{p.value}</Mixed>
                    </RebarValue>
                  ) : (
                    <Mixed>{p.value}</Mixed>
                  )}
                </ValueCell>
                <CheckCell>{p.check && <Tick type="checkbox" aria-label={`附加 ${p.name}`} />}</CheckCell>
              </tr>
            ))}
          </tbody>
        </Table>
      </PropBody>
    </PropWindow>
  );
}

/* ---------- layout dialog ---------- */

const Dialog = styled.section`
  position: absolute;
  left: 768px;
  top: 364px;
  width: 413px;
  border: 1px solid #0078d7;
  background: #f0f0f0;
`;

const DialogTitle = styled.div`
  display: flex;
  align-items: center;
  gap: 4px;
  height: 25px;
  padding: 0 10px 0 3px;
  background: #fff;
  h2 { flex: 1; margin: 0; font: inherit; }
  button { display: flex; padding: 0; border: 0; background: none; }
`;

const DialogBody = styled.form`
  display: flex;
  gap: 6px;
  padding: 14px 19px 9px 13px;
`;

const Group = styled.fieldset`
  margin: 0;
  padding: 0 7px 2px;
  border: 1px solid #dcdcdc;
  min-width: 0;
  legend { padding: 0; height: 16px; }
`;

const ModeGroup = styled(Group)`
  flex: none;
  width: 121px;
  align-self: flex-start;
`;

const RadioLabel = styled.label`
  display: flex;
  align-items: center;
  gap: 2px;
  height: 88px;
  padding-bottom: 2px;
  white-space: nowrap;
`;

const Radio = styled.input`
  appearance: none;
  flex: none;
  width: 13px;
  height: 13px;
  border: 1px solid #333;
  border-radius: 50%;
  background: #fff;
  &:checked { background: radial-gradient(circle, #333 0 3px, #fff 4px); }
`;

const Settings = styled.div`
  flex: 1;
  padding-top: 16px;
`;

const BarGroup = styled(Group)<{ $tight?: boolean }>`
  display: flex;
  flex-direction: column;
  gap: ${(p) => (p.$tight ? 6 : 8)}px;
  width: 248px;
  margin-bottom: 33px;
  padding: ${(p) => (p.$tight ? 6 : 4)}px 11px 12px 6px;
`;

const FieldRow = styled.label`
  display: flex;
  align-items: center;
  height: 20px;
  padding-left: 8px;
  & > span:first-child { width: 41px; }
`;

const Field = styled.span<{ $w: number; $look: "focus" | "plain" | "gray" }>`
  display: grid;
  align-items: center;
  flex: none;
  width: ${(p) => p.$w}px;
  height: 20px;
  border: 1px solid
    ${(p) => (p.$look === "focus" ? "#0078d7" : p.$look === "gray" ? "#adadad" : "#7a7a7a")};
  background: ${(p) => (p.$look === "gray" ? "#e1e1e1" : "#fff")};
  & > * { grid-area: 1 / 1; }
  & > svg { justify-self: end; margin-right: 4px; pointer-events: none; }
`;

function Dropdown({ look, w, value, label }: { look: "focus" | "plain" | "gray"; w: number; value: string; label?: string }) {
  return (
    <Field $w={w} $look={look}>
      <BareSelect aria-label={label}>
        <option>{value}</option>
      </BareSelect>
      <svg width="9" height="6" viewBox="0 0 9 6" aria-hidden="true">
        <path d="m.5.5 4 4 4-4" fill="none" stroke="#444" strokeWidth="1.2" />
      </svg>
    </Field>
  );
}

const AxisRow = styled.div`
  display: flex;
  align-items: center;
  justify-content: space-between;
  height: 20px;
  margin-top: 44px;
  label { display: flex; align-items: center; gap: 2px; }
`;

const Actions = styled.div`
  display: flex;
  justify-content: flex-end;
  gap: 21px;
  margin-top: 18px;
  padding-right: 1px;
`;

const Push = styled.button<{ $w: number }>`
  width: ${(p) => p.$w}px;
  height: 28px;
  padding: 0;
  border: 1px solid #adadad;
  background: #e1e1e1;
`;

function SmartLayout() {
  return (
    <Dialog role="dialog" aria-label="智能布置">
      <DialogTitle>
        <Icon name="app" />
        <h2>智能布置</h2>
        <button type="button" aria-label="关闭">
          <svg width="11" height="11" viewBox="0 0 11 11"><path d="m.5.5 10 10M10.5.5l-10 10" stroke="#000" /></svg>
        </button>
      </DialogTitle>
      <DialogBody>
        <ModeGroup>
          <legend>布置方式选择</legend>
          <RadioLabel><Radio type="radio" name="mode" />双向布置</RadioLabel>
          <RadioLabel><Radio type="radio" name="mode" />双网双向布置</RadioLabel>
          <RadioLabel><Radio type="radio" name="mode" defaultChecked /><span><Mixed>XY向布置</Mixed></span></RadioLabel>
        </ModeGroup>
        <Settings>
          <BarGroup>
            <legend>底筋</legend>
            <FieldRow><span><Mixed>X方向</Mixed></span><Dropdown look="focus" w={180} value="" /></FieldRow>
            <FieldRow><span><Mixed>Y方向</Mixed></span><Dropdown look="plain" w={180} value="" /></FieldRow>
          </BarGroup>
          <BarGroup $tight>
            <legend>面筋</legend>
            <FieldRow><span><Mixed>X方向</Mixed></span><Dropdown look="plain" w={180} value="" /></FieldRow>
            <FieldRow><span><Mixed>Y方向</Mixed></span><Dropdown look="plain" w={180} value="" /></FieldRow>
          </BarGroup>
          <AxisRow>
            <label><Tick type="checkbox" defaultChecked />选择参照轴网</label>
            <Dropdown look="gray" w={144} value="轴网-1" label="参照轴网" />
          </AxisRow>
          <Actions>
            <Push type="submit" $w={72}>确定</Push>
            <Push type="button" $w={78}>取消</Push>
          </Actions>
        </Settings>
      </DialogBody>
    </Dialog>
  );
}

/* ---------- red guide marks over everything ---------- */

const Marks = styled.svg`
  position: absolute;
  inset: 0;
  width: 100%;
  height: 100%;
  pointer-events: none;
`;

function GuideMarks() {
  return (
    <Marks aria-hidden="true">
      <g fill="none" stroke="#f04040" strokeWidth="1">
        <ellipse cx="709" cy="83" rx="48" ry="21" />
        <ellipse cx="875" cy="85" rx="55" ry="18" />
        <ellipse cx="983" cy="85" rx="36" ry="23" />
        <ellipse cx="1135" cy="521" rx="29" ry="99" />
      </g>
      <g fill="#ff3b3b">
        <path d="M721 96 812 96 812 93 823 98 812 103 812 100 721 97z" />
        <path d="M906 99 942 98 942 95 953 101 942 106 942 103 906 101z" />
        <path d="M974 107 1095 419 1099 418 1098 431 1088 422 1091 421 975 109z" />
        <path d="M975 108 1020 236" stroke="#d03030" fill="none" />
      </g>
    </Marks>
  );
}

export default function App() {
  return (
    <Shell>
      <GlobalStyle />
      <FileBar />
      <Body>
        <Panel $w={165}>
          <PanelTop title="模块导航栏" />
          <NavButton type="button">工程设置</NavButton>
          <NavButton type="button">绘图输入</NavButton>
          <NavTools>
            <ListButton type="button" aria-label="全部展开">
              <svg width="18" height="16" viewBox="0 0 18 16">
                <path d="M4 1v9M0 5.5h9M11 6v9M7 10.5h9" stroke="#000" strokeWidth="3" />
                <path d="M4 2v7M1 5.5h7M11 7v7M8 10.5h7" stroke="#20a090" />
              </svg>
            </ListButton>
            <ListButton type="button" aria-label="全部折叠">
              <svg width="18" height="16" viewBox="0 0 18 16">
                <path d="M0 4.5h9M7 10.5h9" stroke="#000" strokeWidth="3" />
                <path d="M1 4.5h7M8 10.5h7" stroke="#20a090" />
              </svg>
            </ListButton>
          </NavTools>
          <NavTree />
        </Panel>
        <ComponentList />
        <Main>
          <DrawingTools />
          <Plan />
        </Main>
      </Body>
      <PropertyEditor />
      <SmartLayout />
      <GuideMarks />
      <Defs />
    </Shell>
  );
}
